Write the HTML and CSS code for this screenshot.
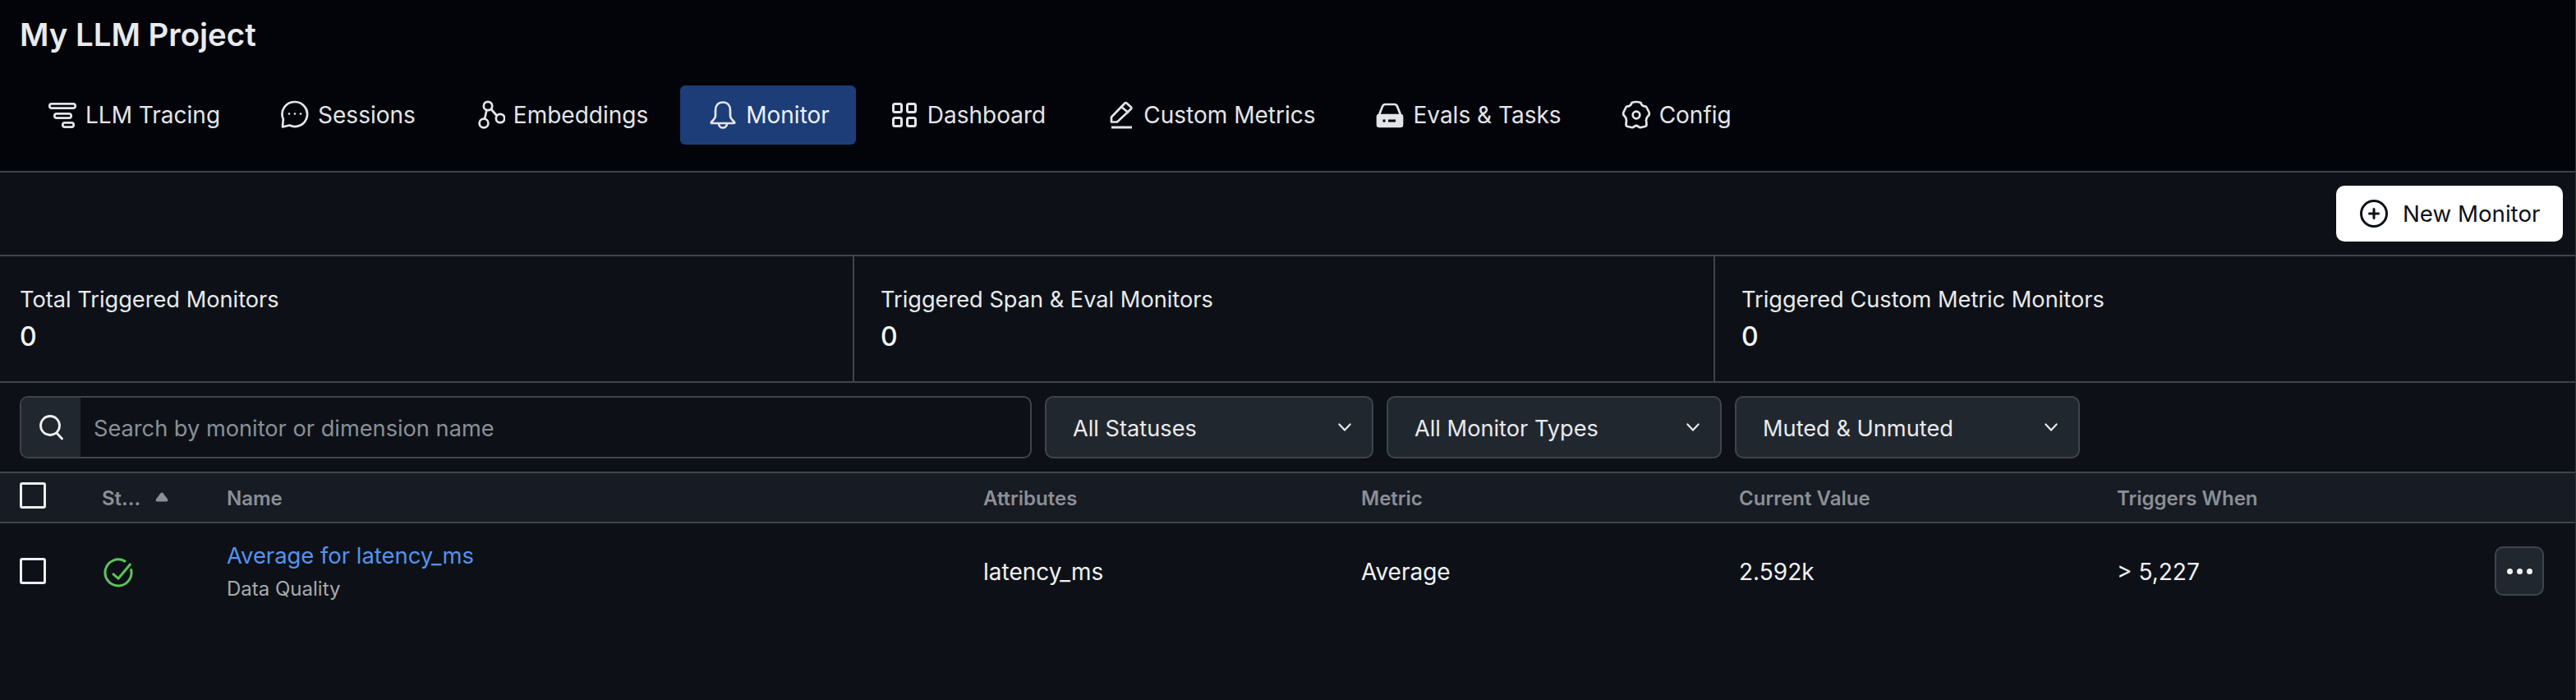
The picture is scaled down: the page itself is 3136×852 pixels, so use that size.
FILE: index.html
```html
<!DOCTYPE html>
<html lang="en">
<head>
  <meta charset="UTF-8">
  <title>My LLM Project - Monitor</title>
  <link rel="stylesheet" href="styles.css">
</head>
<body>
  <header class="page-header">
    <h1>My LLM Project</h1>
    <nav class="tabs">
      <a class="tab">
        <svg class="icon" viewBox="0 0 36 36"><rect x="2.300" y="4.300" width="31.400" height="5.400" rx="2.700"/><rect x="8.300" y="16.300" width="20.400" height="5.400" rx="2.700"/><rect x="18.300" y="27.300" width="13.400" height="5.400" rx="2.700"/></svg>
        LLM Tracing
      </a>
      <a class="tab">
        <svg class="icon" viewBox="0 0 36 36"><path d="M18 2a15 15 0 1 1-6.500 28.500L3 32.500l.8-9.500A15 15 0 0 1 18 2z"/><circle class="dot" cx="11" cy="16.500" r="1.300"/><circle class="dot" cx="18" cy="16.500" r="1.300"/><circle class="dot" cx="25" cy="16.500" r="1.300"/></svg>
        Sessions
      </a>
      <a class="tab">
        <svg class="icon" viewBox="0 0 36 36"><circle cx="15" cy="7" r="5.200"/><circle cx="10" cy="28" r="5.400"/><circle cx="30" cy="22" r="5.200"/><path d="M13.500 12 11 22.500M19 11l6.500 7.500"/></svg>
        Embeddings
      </a>
      <a class="tab active">
        <svg class="icon" viewBox="0 0 36 36"><path d="M18 2.500c-5.500 0-9 4-9 10V19c0 3-3 5.500-5 7.500-.8 1 0 1.500.5 1.500h27c.5 0 1.300-.5.5-1.500-2-2-5-4.500-5-7.500v-6.500c0-6-3.500-10-9-10z"/><path d="M13 28.500a5 5 0 0 0 10 0"/></svg>
        Monitor
      </a>
      <a class="tab">
        <svg class="icon thick" viewBox="0 0 36 36"><rect x="4.500" y="4.500" width="10" height="10" rx="2"/><rect x="21.500" y="4.500" width="10" height="10" rx="2"/><rect x="4.500" y="21.500" width="10" height="10" rx="2"/><rect x="21.500" y="21.500" width="10" height="10" rx="2"/></svg>
        Dashboard
      </a>
      <a class="tab">
        <svg class="icon" viewBox="0 0 36 36"><path d="M7 26.500v-6L23.500 3.500a1.500 1.500 0 0 1 2 0l5.500 5a1.500 1.500 0 0 1 0 2L14 26.500z"/><path d="M19 8l8 6.500"/><path class="under" d="M7 33h25"/></svg>
        Custom Metrics
      </a>
      <a class="tab">
        <svg class="icon" viewBox="0 0 36 36"><path class="fill" d="M5 18h26a2 2 0 0 1 2 2v9.500a2.500 2.500 0 0 1-2.500 2.500h-25A2.500 2.500 0 0 1 3 29.500V20a2 2 0 0 1 2-2z"/><path d="M4.500 19 9 7.500C9.700 6 11 5 12.500 5h11c1.500 0 2.800 1 3.500 2.500L31.500 19"/><rect class="cut" x="9.500" y="23.500" width="3" height="3"/><rect class="cut" x="16" y="23.500" width="9" height="3"/></svg>
        Evals &amp; Tasks
      </a>
      <a class="tab">
        <svg class="icon" viewBox="0 0 36 36"><path d="M12.500 3Q18 1 23.500 3Q24 6.500 28 7.500Q29.500 7 30.500 8.500L33.500 14.500Q34.500 17.500 32.500 19Q30 21.500 30 24.500L30.500 29.500Q30.500 31.500 28.500 32L24 33Q22 33.500 20.500 32Q18 30 15.500 32Q14 33.500 12 33L7.500 32Q5.500 31.500 5.500 29.500L6 24.500Q6 21.500 3.500 19Q1.500 17.500 2.500 14.500L5.500 8.500Q6.500 7 8 7.500Q12 6.500 12.500 3z"/><circle cx="18" cy="18" r="4.300"/></svg>
        Config
      </a>
    </nav>
  </header>

  <div class="toolbar">
    <button class="btn-new">
      <svg class="btn-icon" viewBox="0 0 34 34"><circle cx="17" cy="17" r="15.500"/><path d="M17 11.500v11M11.500 17h11"/></svg>
      New Monitor
    </button>
  </div>

  <section class="stats">
    <div class="stat">
      <div class="stat-label">Total Triggered Monitors</div>
      <div class="stat-value">0</div>
    </div>
    <div class="stat">
      <div class="stat-label">Triggered Span &amp; Eval Monitors</div>
      <div class="stat-value">0</div>
    </div>
    <div class="stat">
      <div class="stat-label">Triggered Custom Metric Monitors</div>
      <div class="stat-value">0</div>
    </div>
  </section>

  <section class="filters">
    <div class="search">
      <span class="search-addon">
        <svg class="search-icon" viewBox="0 0 32 32"><circle cx="15" cy="14" r="11.500"/><path d="M23 23l6.500 7"/></svg>
      </span>
      <span class="search-input">Search by monitor or dimension name</span>
    </div>
    <div class="select select-status">All Statuses <svg class="chevron" viewBox="0 0 14 10"><path d="M1.500 2 7 8l5.500-6"/></svg></div>
    <div class="select select-type">All Monitor Types <svg class="chevron" viewBox="0 0 14 10"><path d="M1.500 2 7 8l5.500-6"/></svg></div>
    <div class="select select-mute">Muted &amp; Unmuted <svg class="chevron" viewBox="0 0 14 10"><path d="M1.500 2 7 8l5.500-6"/></svg></div>
  </section>

  <div class="monitor-table">
    <div class="row head">
      <div class="cell-check"><span class="checkbox"></span></div>
      <div class="cell-status">St... <svg class="sort" viewBox="0 0 16 12"><path d="M8 .5a2 2 0 0 1 1.500.7l5.500 7.300c.8 1.200.3 3-1.500 3h-11c-1.800 0-2.300-1.800-1.500-3l5.500-7.300A2 2 0 0 1 8 .5z"/></svg></div>
      <div class="cell-name">Name</div>
      <div class="cell">Attributes</div>
      <div class="cell">Metric</div>
      <div class="cell">Current Value</div>
      <div class="cell">Triggers When</div>
      <div class="cell-more"></div>
    </div>
    <div class="row body-row">
      <div class="cell-check"><span class="checkbox"></span></div>
      <div class="cell-status">
        <svg class="ok-icon" viewBox="0 0 36 36"><path d="M33.600 14.500A16 16 0 1 1 26 4.100"/><path d="M12 19.800l6 5.400L32.400 8"/></svg>
      </div>
      <div class="cell-name">
        <a class="monitor-link">Average for latency_ms</a>
        <div class="monitor-type">Data Quality</div>
      </div>
      <div class="cell">latency_ms</div>
      <div class="cell">Average</div>
      <div class="cell">2.592k</div>
      <div class="cell">&gt; 5,227</div>
      <div class="cell-more">
        <button class="btn-more"><i></i><i></i><i></i></button>
      </div>
    </div>
  </div>
</body>
</html>
```

FILE: styles.css
```css
* {
  box-sizing: border-box;
  margin: 0;
  padding: 0;
}
body {
  font-family: 'Inter', sans-serif;
  background: #0d1117;
  color: #f0f1f3;
  min-height: 100vh;
  overflow: hidden;
  border-right: 1px solid #30343b;
}

/* Header and tabs */
.page-header {
  height: 210px;
  background: #02040a;
  border-bottom: 2px solid #3f444c;
  padding: 18px 24px 0;
}
h1 {
  font-size: 38.400px;
  line-height: 48px;
  font-weight: 600;
  color: #e9eaec;
}
.tabs {
  display: flex;
  gap: 7px;
  margin-top: 38px;
}
.tab {
  display: flex;
  align-items: center;
  gap: 10px;
  height: 72px;
  padding: 0 32px 0 34px;
  border-radius: 6px;
  font-size: 28px;
  color: #e4e5e7;
}
.tab.active {
  background: #1c3d78;
  color: #eef0f5;
}
.icon {
  width: 36px;
  height: 36px;
  fill: none;
  stroke: #e4e5e7;
  stroke-width: 2.700;
  stroke-linecap: round;
  stroke-linejoin: round;
}
.icon.thick {
  stroke-width: 3;
}
.icon .dot {
  fill: #e4e5e7;
  stroke: none;
}
.icon .fill {
  fill: #e4e5e7;
}
.icon .cut {
  fill: #02040a;
  stroke: none;
}
.icon .under {
  stroke-width: 3;
  stroke-linecap: butt;
}

/* Toolbar */
.toolbar {
  display: flex;
  justify-content: flex-end;
  height: 102px;
  padding: 16px 15px 0 16px;
  border-bottom: 2px solid #3f444c;
}
.btn-new {
  display: flex;
  align-items: center;
  gap: 18px;
  width: 276px;
  height: 68px;
  padding-left: 29px;
  border: none;
  border-radius: 10px;
  background: #fff;
  color: #0d1117;
  font-family: inherit;
  font-size: 27.700px;
}
.btn-icon {
  width: 34px;
  height: 34px;
  fill: none;
  stroke: #0d1117;
  stroke-width: 3;
  stroke-linecap: round;
}

/* Stats */
.stats {
  display: grid;
  grid-template-columns: 1040px 1048px 1fr;
  height: 154px;
  border-bottom: 2px solid #3f444c;
}
.stat {
  padding: 36px 24px 0 32px;
  border-right: 2px solid #3f444c;
}
.stat:first-child {
  padding-left: 24px;
}
.stat:last-child {
  border-right: none;
}
.stat-label {
  font-size: 27.200px;
  line-height: 34px;
  color: #e9eaec;
}
.stat-value {
  margin-top: 8px;
  font-size: 32px;
  line-height: 40px;
  font-weight: 500;
  color: #f5f6f7;
}

/* Filters */
.filters {
  display: flex;
  gap: 16px;
  height: 110px;
  padding: 16px 24px 0;
  border-bottom: 2px solid #3f444c;
}
.search {
  display: flex;
  width: 1232px;
  height: 76px;
  border: 2px solid #3f444c;
  border-radius: 10px;
  overflow: hidden;
}
.search-addon {
  display: flex;
  align-items: center;
  justify-content: center;
  width: 72px;
  background: #21272f;
}
.search-icon {
  width: 32px;
  height: 32px;
  fill: none;
  stroke: #f0f1f3;
  stroke-width: 2.800;
  stroke-linecap: round;
}
.search-input {
  display: flex;
  align-items: center;
  padding: 2px 0 0 16px;
  font-size: 27.200px;
  color: #8b8f96;
}
.select {
  display: flex;
  align-items: center;
  justify-content: space-between;
  height: 76px;
  padding: 2px 24px 0 32px;
  background: #21272f;
  border: 2px solid #3f444c;
  border-radius: 10px;
  font-size: 27.200px;
  color: #e9eaec;
}
.select-status { width: 400px; }
.select-type { width: 408px; }
.select-mute { width: 420px; }
.chevron {
  width: 18px;
  height: 12px;
  margin-top: -2px;
  fill: none;
  stroke: #e9eaec;
  stroke-width: 1.800;
  stroke-linecap: round;
  stroke-linejoin: round;
}

/* Table */
.row {
  display: grid;
  grid-template-columns: 100px 152px 921px 460px 460px 460px 1fr 98px;
  align-items: center;
  padding-left: 24px;
}
.head {
  height: 61px;
  padding-top: 2px;
  background: #171b23;
  border-bottom: 2px solid #3f444c;
  font-size: 24px;
  font-weight: 600;
  color: #8b8f96;
}
.head .cell-check {
  margin-top: -8px;
}
.body-row {
  height: 116px;
  font-size: 28px;
  color: #f0f1f3;
}
.body-row .cell {
  padding-top: 2px;
}
.checkbox {
  display: block;
  width: 32px;
  height: 32px;
  border: 3px solid #eeeeee;
  border-radius: 3px;
}
.cell-status {
  display: flex;
  align-items: center;
  gap: 18px;
}
.sort {
  width: 16px;
  height: 12px;
  margin-top: -4px;
  fill: #8b8f96;
}
.ok-icon {
  width: 36px;
  height: 36px;
  margin: 4px 0 0 2px;
  fill: none;
  stroke: #5ec35a;
  stroke-width: 3;
  stroke-linecap: round;
  stroke-linejoin: round;
}
.monitor-link {
  display: block;
  font-size: 27.400px;
  line-height: 36px;
  color: #5593ee;
}
.monitor-type {
  margin-top: 8px;
  font-size: 24px;
  line-height: 30px;
  color: #a8a9ac;
}
.cell-more {
  display: flex;
}
.btn-more {
  display: flex;
  align-items: center;
  justify-content: center;
  gap: 5px;
  width: 60px;
  height: 60px;
  background: #21272f;
  border: 2px solid #3f444c;
  border-radius: 10px;
}
.btn-more i {
  width: 7px;
  height: 7px;
  border-radius: 50%;
  background: #f0f1f3;
}
```
